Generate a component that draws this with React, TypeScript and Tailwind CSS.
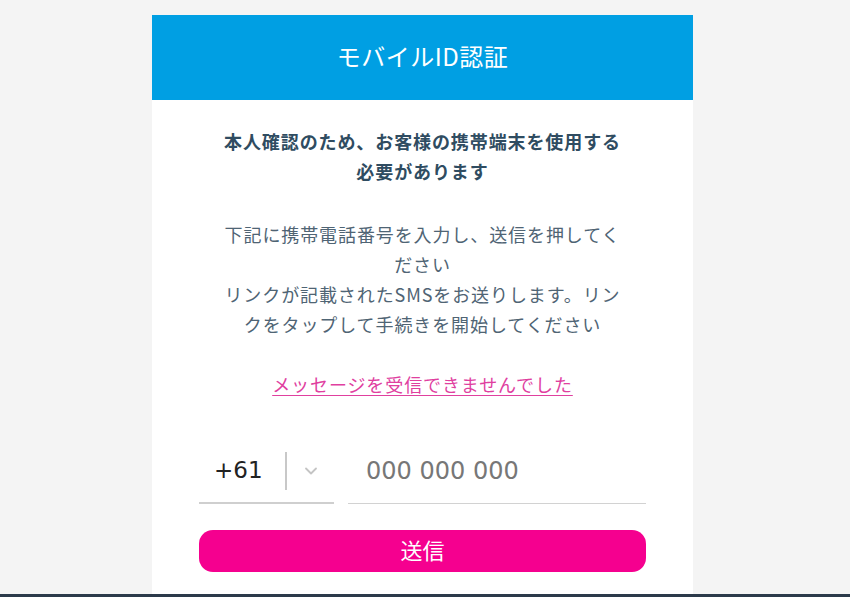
import { ChevronDown } from 'lucide-react';

const jp = '"Noto Sans CJK JP", "Noto Sans", sans-serif';

export default function App() {
  return (
    <div className="w-full h-[597px] overflow-hidden flex flex-col bg-[#f4f4f4]" style={{ fontFamily: jp }}>
      <div className="h-[594px] flex justify-center pr-[5px] pt-[15px]">
        <div className="w-[541px] bg-white flex flex-col overflow-hidden">
          <div className="h-[85px] shrink-0 bg-[#009fe3] flex items-center justify-center pb-[3px]">
            <h1 className="text-white text-[24px] font-normal tracking-[0.5px]">モバイルID認証</h1>
          </div>

          <div className="px-[47px] pt-[26px] flex flex-col items-center">
            <p className="w-[404px] text-center text-[18px] tracking-[0.9px] leading-[30px] font-bold text-[#2f4c61]">
              本人確認のため、お客様の携帯端末を使用する必要があります
            </p>

            <div className="w-[404px] mt-[33px] text-center text-[18px] tracking-[0.9px] leading-[30px] text-[#4f6474]">
              <p>下記に携帯電話番号を入力し、送信を押してください</p>
              <p>リンクが記載されたSMSをお送りします。リンクをタップして手続きを開始してください</p>
            </div>

            <a href="#" className="mt-[30px] text-[18px] tracking-[0.9px] leading-[30px] text-[#e0409f] underline underline-offset-[3px]">
              メッセージを受信できませんでした
            </a>

            <div className="w-full mt-[52px] flex gap-[14px]">
              <div className="w-[135px] h-[53px] border-b-2 border-[#cfcfcf] flex items-center pl-[15px] pb-[12px]">
                <span className="text-[23px] text-[#222]" style={{ fontFamily: '"DejaVu Sans", sans-serif' }}>+61</span>
                <span className="ml-[22px] w-[2px] h-[38px] bg-[#c8c8c8]" />
                <ChevronDown className="ml-[14px] w-[20px] h-[20px] text-[#c4c4c4]" strokeWidth={2.2} />
              </div>
              <div className="flex-1 h-[53px] border-b border-[#d2d2d2] flex items-center pl-[18px] pb-[12px]">
                <input
                  placeholder="000 000 000"
                  className="w-full bg-transparent outline-none text-[24px] text-[#222] placeholder:text-[#777]"
                  style={{ fontFamily: '"DejaVu Sans", sans-serif' }}
                />
              </div>
            </div>

            <button className="w-full mt-[26px] h-[42px] rounded-[14px] bg-[#f5008f] text-white text-[22px] leading-none flex items-center justify-center pb-[4px]">
              送信
            </button>
          </div>
        </div>
      </div>
      <div className="flex-1 bg-[#2c3a4a]" />
    </div>
  );
}
